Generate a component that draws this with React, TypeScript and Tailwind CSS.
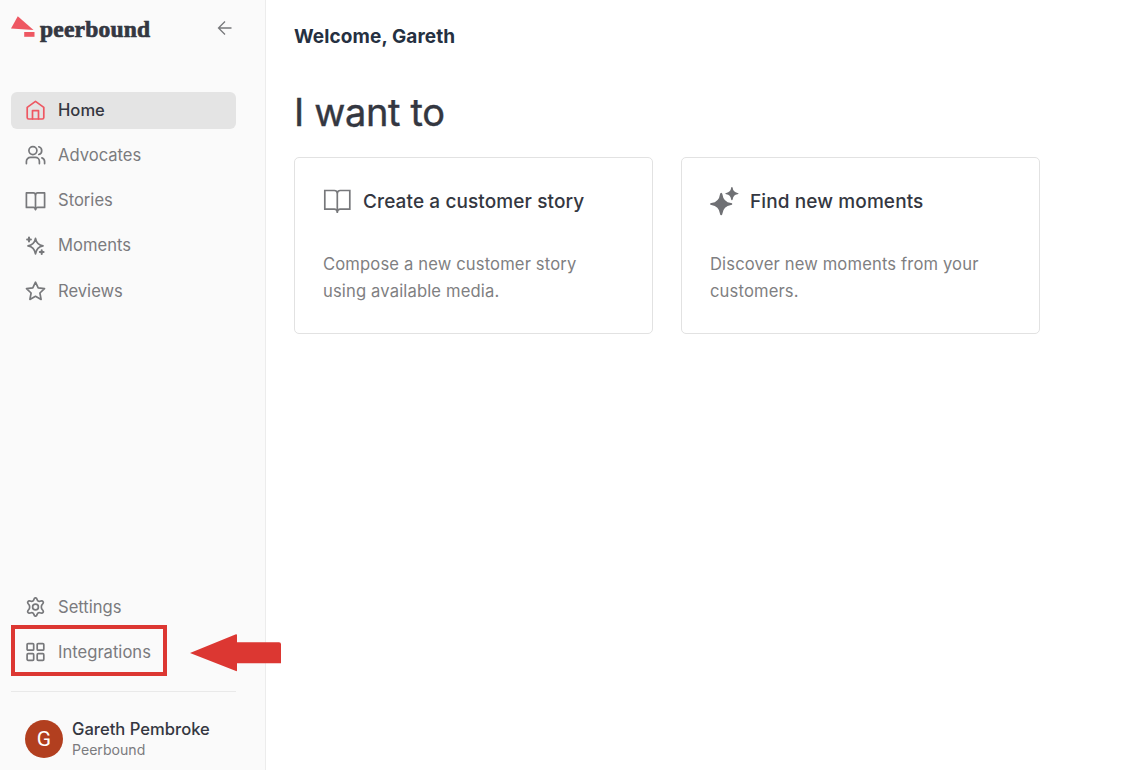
import React from 'react';

interface IconProps {
    className?: string;
}

interface NavItemProps {
    label: string;
    icon: React.ReactNode;
    active?: boolean;
    highlighted?: boolean;
}

interface ActionCardProps {
    title: string;
    description: string;
    icon: React.ReactNode;
}

const NavIcon: React.FC<{ children: React.ReactNode }> = ({ children }) => (
    <svg
        viewBox="-0.5 0 21 20"
        className="h-5 w-[21px] shrink-0"
        fill="none"
        stroke="currentColor"
        strokeWidth={1.7}
        strokeLinecap="round"
        strokeLinejoin="round"
    >
        {children}
    </svg>
);

const HomeIcon: React.FC = () => (
    <NavIcon>
        <path d="M1.7 7.4 10 1.4l8.3 6v10.1a1.5 1.5 0 0 1-1.5 1.5H3.2a1.5 1.5 0 0 1-1.5-1.5z" />
        <path d="M7 18.8v-8.2h6v8.2" />
    </NavIcon>
);

const UsersIcon: React.FC = () => (
    <NavIcon>
        <circle cx="7.4" cy="5.6" r="4" />
        <path d="M.9 18.6v-2.2a4 4 0 0 1 4-4h5a4 4 0 0 1 4 4v2.2" />
        <path d="M13.3 1.8a4 4 0 0 1 0 7.7" />
        <path d="M16.4 12.9a4 4 0 0 1 2.7 3.7v2" />
    </NavIcon>
);

const BookIcon: React.FC = () => (
    <NavIcon>
        <path d="M10 3.8a2.2 2.2 0 0 0-2.2-1.9H.9v14.5h6.9a2.2 2.2 0 0 1 2.2 2 2.2 2.2 0 0 1 2.2-2h6.9V1.9h-6.9A2.2 2.2 0 0 0 10 3.8z" />
        <path d="M10 3.8v14.8" />
    </NavIcon>
);

const SparklesIcon: React.FC = () => (
    <NavIcon>
        <path d="M10 2.3c.8 4.6 2.9 6.7 7.5 7.5-4.6.8-6.700 3.100-7.500 8-.8-4.900-2.900-7.200-7.500-8 4.600-.8 6.700-2.900 7.500-7.500z" />
        <path d="M3.5 1.6v3.8M1.6 3.5h3.8M16.2 14.2V18M14.3 16.1h3.8" strokeWidth={2} />
    </NavIcon>
);

const StarIcon: React.FC = () => (
    <NavIcon>
        <path d="m10 1.2 2.7 5.7 6.300.8-4.600 4.300 1.200 6.400L10 15.300l-5.600 3.100L5.600 12 1 7.700l6.300-.8z" />
    </NavIcon>
);

const GearIcon: React.FC = () => (
    <NavIcon>
        <circle cx="10" cy="10" r="2.9" />
        <path d="M8.300 2.700Q8.800.8 10 .8t1.700 1.900c.2 1.200 1.400 1.900 2.600 1.500 1.800-.7 2.700-.6 3.300.5.600 1 .2 1.800-1 2.900-1 .9-1 3.900 0 4.800 1.200 1.100 1.600 1.900 1 2.900-.6 1.100-1.500 1.200-3.300.5-1.200-.4-2.400.3-2.600 1.500q-.5 1.900-1.700 1.900t-1.700-1.900c-.2-1.200-1.400-1.900-2.600-1.500-1.800.7-2.700.6-3.300-.5-.6-1-.2-1.800 1-2.900 1-.9 1-3.900 0-4.800-1.200-1.100-1.600-1.900-1-2.900.6-1.100 1.500-1.200 3.300-.5 1.200.4 2.400-.3 2.600-1.500z" />
    </NavIcon>
);

const GridIcon: React.FC = () => (
    <NavIcon>
        <rect x="1.6" y="1.6" width="6.6" height="6.6" rx="1" />
        <rect x="11.7" y="1.6" width="6.6" height="6.6" rx="1" />
        <rect x="1.6" y="11.7" width="6.6" height="6.6" rx="1" />
        <rect x="11.7" y="11.7" width="6.6" height="6.6" rx="1" />
    </NavIcon>
);

const BackIcon: React.FC<IconProps> = ({ className }) => (
    <svg viewBox="0 0 16 16" className={className} fill="none" stroke="currentColor" strokeWidth={1.3}>
        <path d="M15.500 8H2.500M9 1.500 2.500 8 9 14.500" />
    </svg>
);

const Logo: React.FC = () => (
    <div className="flex items-start gap-[5px]">
        <svg viewBox="0 0 24 22" className="mt-[3px] h-[22px] w-6" fill="#ee5762">
            <path d="M6.8.2 22.5 13.9 0 12.5z" />
            <path d="M13.2 16h10.3v4.8H13.2z" />
        </svg>
        <span className="mt-[2px] font-['Liberation_Serif',serif] text-[23.5px] leading-7 font-bold tracking-[0.2px] text-[#343741] [-webkit-text-stroke:0.7px_#343741]">
            peerbound
        </span>
    </div>
);

const NavItem: React.FC<NavItemProps> = ({ label, icon, active, highlighted }) => (
    <a
        className={`relative flex h-[37.5px] items-center gap-3 rounded-md pl-[14px] text-[16.6px] ${
            active ? 'bg-[#e4e4e4] font-medium text-[#343741]' : 'text-[#7b7b7e]'
        }`}
    >
        <span className={active ? 'text-[#ee5762]' : 'text-[#77787b]'}>{icon}</span>
        <span>{label}</span>
        {highlighted && (
            <>
                <span className="absolute -top-[9px] left-0 h-[51px] w-[156px] border-4 border-[#dc3732]" />
                <svg viewBox="0 0 91 38" className="absolute top-0 left-[179px] h-[38px] w-[91px]" fill="#dc3732">
                    <path d="M0 19 46 .3q1-.3 1 1v6.900h42q2 0 2 2v19H47v7.100q0 1.200-1 .8z" />
                </svg>
            </>
        )}
    </a>
);

const ActionCard: React.FC<ActionCardProps> = ({ title, description, icon }) => (
    <div className="h-[177px] w-[359px] rounded-[5px] border border-[#e2e2e2] px-7 pt-7">
        <div className="flex h-8 items-center gap-[11px]">
            <span className="-ml-px">{icon}</span>
            <h2 className="text-[19px] font-medium tracking-[0.11px] text-[#343741]">{title}</h2>
        </div>
        <p className="mt-[33px] w-[285px] text-[16.6px] leading-[27px] tracking-[0.14px] text-[#7f7f82]">
            {description}
        </p>
    </div>
);

const App: React.FC = () => {
    return (
        <div className="flex h-[770px] w-[1138px] overflow-hidden bg-white font-['Inter',sans-serif]">
            {/* Sidebar */}
            <aside className="flex w-[266px] shrink-0 flex-col border-r border-[#ececec] bg-[#fafafa] pr-[29px] pl-[11px]">
                <div className="flex h-[91.5px] items-start justify-between pt-[13px]">
                    <Logo />
                    <BackIcon className="mt-[7px] mr-1 h-4 w-4 text-[#77787b]" />
                </div>

                <nav className="flex flex-col gap-[7.7px]">
                    <NavItem label="Home" icon={<HomeIcon />} active />
                    <NavItem label="Advocates" icon={<UsersIcon />} />
                    <NavItem label="Stories" icon={<BookIcon />} />
                    <NavItem label="Moments" icon={<SparklesIcon />} />
                    <NavItem label="Reviews" icon={<StarIcon />} />
                </nav>

                <div className="mt-auto flex flex-col gap-[7.7px]">
                    <NavItem label="Settings" icon={<GearIcon />} />
                    <NavItem label="Integrations" icon={<GridIcon />} highlighted />
                </div>

                {/* Account */}
                <div className="mt-5 flex h-[79px] items-start gap-[9px] border-t border-[#e9e9e9] pt-7 pl-[14px]">
                    <div className="flex h-[38px] w-[38px] items-center justify-center rounded-full bg-[#b23f1f] pt-0.5 font-['Roboto',sans-serif] text-[21px] text-white">
                        G
                    </div>
                    <div className="-mt-[2px]">
                        <div className="text-[16.6px] leading-[22px] font-medium text-[#343741]">Gareth Pembroke</div>
                        <div className="text-[14.1px] leading-5 text-[#7b7b7e]">Peerbound</div>
                    </div>
                </div>
            </aside>

            {/* Main content */}
            <main className="flex-1 pl-7">
                <p className="pt-[23px] text-[19px] leading-7 font-bold tracking-[0.1px] text-[#253041]">
                    Welcome, Gareth
                </p>
                <h1 className="mt-[37px] text-[38px] leading-[48px] tracking-[-0.35px] text-[#343741] [-webkit-text-stroke:0.4px_currentColor]">
                    I want to
                </h1>
                <div className="mt-[21px] flex gap-7">
                    <ActionCard
                        title="Create a customer story"
                        description="Compose a new customer story using available media."
                        icon={
                            <svg
                                viewBox="0 0 30 30"
                                className="h-[30px] w-[30px]"
                                fill="none"
                                stroke="#77787b"
                                strokeWidth={1.7}
                            >
                                <path d="M15.3 6a3 3 0 0 0-3-2.500H2.800v18.700h9.500a3 3 0 0 1 3 2.300 3 3 0 0 1 3-2.300h9.500V3.500h-9.500a3 3 0 0 0-3 2.500z" />
                                <path d="M15.3 6v20" />
                            </svg>
                        }
                    />
                    <ActionCard
                        title="Find new moments"
                        description="Discover new moments from your customers."
                        icon={
                            <svg viewBox="0 0 30 30" className="h-[30px] w-[30px]" fill="#6f7074">
                                <path d="M12.200 5.700q1 0 1.200 1.500 1 7.800 8.600 8.800 1.300.2 1.300 1t-1.300 1q-7.600 1-8.600 8.800-.2 1.500-1.200 1.500t-1.200-1.500q-1-7.800-8.600-8.800-1.300-.2-1.300-1t1.300-1q7.600-1 8.600-8.800.2-1.500 1.200-1.500z" />
                                <path d="M22.900 0q.7 0 .8 1 .6 4.300 4.800 4.900 1 .1 1 .7t-1 .7q-4.200.6-4.800 4.900-.1 1-.8 1t-.8-1q-.6-4.300-4.800-4.900-1-.1-1-.7t1-.7q4.200-.6 4.800-4.900.1-1 .8-1z" />
                            </svg>
                        }
                    />
                </div>
            </main>
        </div>
    );
};

export default App;
